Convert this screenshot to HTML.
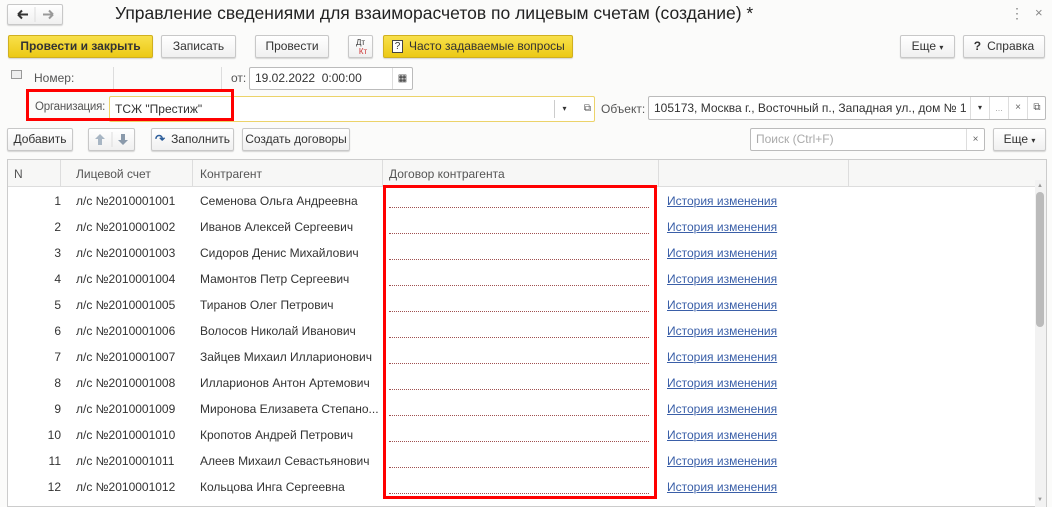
<!DOCTYPE html>
<html><head><meta charset="utf-8"><style>
*{box-sizing:border-box;margin:0;padding:0}
body{width:1052px;height:507px;background:#fbfbfa;font-family:"Liberation Sans",Arial,sans-serif;font-size:12px;color:#333;position:relative;overflow:hidden}
.a{position:absolute}
.btn{position:absolute;height:23px;border:1px solid #c8c8c8;border-radius:2px;background:linear-gradient(#fff,#f0f0f0);box-shadow:0 1px 1px rgba(0,0,0,.15);text-align:center;line-height:21px;color:#333;font-size:12px;white-space:nowrap}
.y{background:linear-gradient(#f8e04a,#ecc915);border-color:#d0b020}
.fld{position:absolute;height:23px;border:1px solid #bbb;border-radius:2px;background:#fff;line-height:21px;padding-left:5px;white-space:nowrap}
.lbl{position:absolute;color:#555;white-space:nowrap}
.vl{position:absolute;width:1px;background:#ddd}
.row{position:absolute;left:7px;width:1026px;height:26px;line-height:26px;white-space:nowrap}
.row span{position:absolute}
.dot{position:absolute;left:382px;width:260px;height:0;border-top:1px dotted #a05050;top:19px}
.lnk{color:#3a5fa8;text-decoration:underline}
</style></head><body>
<!-- title bar -->
<div class="btn" style="left:7px;top:4px;width:56px;height:21px">
<svg class="a" style="left:0;top:0" width="54" height="19"><path d="M10 9.5h10M10 9.5l4-4M10 9.5l4 4" stroke="#333" stroke-width="2" fill="none"/><path d="M27 2v15" stroke="#ddd"/><path d="M35 9.5h10M45 9.5l-4-4M45 9.5l-4 4" stroke="#999" stroke-width="2" fill="none"/></svg></div>
<div class="a" style="left:115px;top:3px;font-size:17.5px;color:#222;white-space:nowrap">Управление сведениями для взаиморасчетов по лицевым счетам (создание) *</div>
<div class="a" style="left:1010px;top:5px;color:#888;font-size:14px">⋮</div>
<div class="a" style="left:1035px;top:5px;color:#888;font-size:13px">×</div>
<!-- toolbar -->
<div class="btn y" style="left:8px;top:35px;width:145px;font-weight:bold;color:#333">Провести и закрыть</div>
<div class="btn" style="left:161px;top:35px;width:75px">Записать</div>
<div class="btn" style="left:255px;top:35px;width:74px">Провести</div>
<div class="btn" style="left:348px;top:35px;width:25px;font-size:8px;line-height:9px;padding-top:2px">Дт<br><span style="color:#c33;padding-left:5px">Кт</span></div>
<div class="btn y" style="left:383px;top:35px;width:190px;text-align:left;padding-left:8px;font-weight:normal"><span style="display:inline-block;width:11px;height:13px;border:1px solid #444;font-size:10px;line-height:11px;text-align:center;background:#fff;vertical-align:middle;margin-right:6px">?</span>Часто задаваемые вопросы</div>
<div class="btn" style="left:900px;top:35px;width:55px">Еще <span style="font-size:8px">▾</span></div>
<div class="btn" style="left:963px;top:35px;width:82px"><b style="margin-right:6px">?</b>Справка</div>
<!-- number row -->
<div class="a" style="left:11px;top:70px;width:11px;height:9px;border:1px solid #999;background:#eee"></div>
<div class="lbl" style="left:34px;top:71px">Номер:</div>
<div class="vl" style="left:113px;top:67px;height:22px"></div>
<div class="vl" style="left:221px;top:67px;height:22px"></div>
<div class="lbl" style="left:231px;top:71px">от:</div>
<div class="fld" style="left:249px;top:67px;width:164px">19.02.2022&nbsp; 0:00:00<span style="position:absolute;right:0;top:0;width:20px;height:21px;border-left:1px solid #ddd;text-align:center;font-size:10px">▦</span></div>
<!-- org row -->
<div class="lbl" style="left:35px;top:101px;font-size:11.5px;letter-spacing:-0.2px">Организация:</div>
<div class="fld" style="left:109px;top:96px;width:486px;height:26px;line-height:24px;border-color:#ecd36a">ТСЖ "Престиж"<span style="position:absolute;right:20px;top:3px;height:18px;border-left:1px solid #ccc;width:20px;text-align:center;font-size:8px;line-height:18px">▾</span><span style="position:absolute;right:3px;top:0;font-size:10px;color:#555">⧉</span></div>
<div class="a" style="left:26px;top:89px;width:208px;height:32px;border:3px solid #f00"></div>
<div class="lbl" style="left:601px;top:102px">Объект:</div>
<div class="fld" style="left:648px;top:96px;width:398px;height:24px;line-height:22px">105173, Москва г., Восточный п., Западная ул., дом № 1
<span style="position:absolute;left:321px;top:0;height:22px;border-left:1px solid #ddd;width:19px;text-align:center;font-size:8px">▾</span>
<span style="position:absolute;left:340px;top:0;height:22px;border-left:1px solid #ddd;width:19px;text-align:center;color:#aaa;font-size:9px">...</span>
<span style="position:absolute;left:359px;top:0;height:22px;border-left:1px solid #ddd;width:19px;text-align:center;color:#666;font-size:10px">×</span>
<span style="position:absolute;left:378px;top:0;height:22px;border-left:1px solid #ddd;width:19px;text-align:center;color:#555;font-size:10px">⧉</span></div>
<!-- button row -->
<div class="btn" style="left:7px;top:128px;width:66px">Добавить</div>
<div class="btn" style="left:88px;top:128px;width:47px">
<svg class="a" style="left:0;top:0" width="45" height="21"><path d="M11 5l-5 5h3v6h4v-6h3z" fill="#a8b6c4"/><path d="M23 3v15" stroke="#ddd"/><path d="M34 16l-5-5h3v-6h4v6h3z" fill="#8a9aab"/></svg></div>
<div class="btn" style="left:151px;top:128px;width:83px"><span style="color:#2c5d9a;font-weight:bold;margin-right:6px">↷</span>Заполнить</div>
<div class="btn" style="left:242px;top:128px;width:108px">Создать договоры</div>
<div class="fld" style="left:750px;top:128px;width:235px;color:#aaa">Поиск (Ctrl+F)<span style="position:absolute;right:0;top:0;width:18px;height:21px;border-left:1px solid #ddd;text-align:center;color:#666;font-size:10px">×</span></div>
<div class="btn" style="left:993px;top:128px;width:53px">Еще <span style="font-size:8px">▾</span></div>
<!-- table -->
<div class="a" style="left:7px;top:159px;width:1040px;height:348px;border:1px solid #ccc;background:#fff"></div>
<div class="a" style="left:8px;top:160px;width:1038px;height:27px;background:#f7f7f6;border-bottom:1px solid #ddd"></div>
<div class="vl" style="left:60px;top:160px;height:27px"></div>
<div class="vl" style="left:192px;top:160px;height:27px"></div>
<div class="vl" style="left:382px;top:160px;height:27px"></div>
<div class="vl" style="left:658px;top:160px;height:27px"></div>
<div class="vl" style="left:848px;top:160px;height:27px"></div>
<div class="lbl" style="left:14px;top:167px">N</div>
<div class="lbl" style="left:76px;top:167px">Лицевой счет</div>
<div class="lbl" style="left:200px;top:167px">Контрагент</div>
<div class="lbl" style="left:389px;top:167px">Договор контрагента</div>
<div class="a" style="left:1035px;top:180px;width:11px;height:327px;background:#f2f2f2"></div>
<div class="a" style="left:1037px;top:183px;font-size:6px;color:#999">▲</div>
<div class="a" style="left:1036px;top:192px;width:8px;height:135px;background:#bbb;border-radius:4px"></div>
<div class="a" style="left:1037px;top:497px;font-size:6px;color:#999">▼</div>

<div class="row" style="top:188px"><span style="left:0;width:54px;text-align:right">1</span><span style="left:69px">л/с №2010001001</span><span style="left:193px">Семенова Ольга Андреевна</span><i class="dot"></i><span style="left:660px" class="lnk">История изменения</span></div>
<div class="row" style="top:214px"><span style="left:0;width:54px;text-align:right">2</span><span style="left:69px">л/с №2010001002</span><span style="left:193px">Иванов Алексей Сергеевич</span><i class="dot"></i><span style="left:660px" class="lnk">История изменения</span></div>
<div class="row" style="top:240px"><span style="left:0;width:54px;text-align:right">3</span><span style="left:69px">л/с №2010001003</span><span style="left:193px">Сидоров Денис Михайлович</span><i class="dot"></i><span style="left:660px" class="lnk">История изменения</span></div>
<div class="row" style="top:266px"><span style="left:0;width:54px;text-align:right">4</span><span style="left:69px">л/с №2010001004</span><span style="left:193px">Мамонтов Петр Сергеевич</span><i class="dot"></i><span style="left:660px" class="lnk">История изменения</span></div>
<div class="row" style="top:292px"><span style="left:0;width:54px;text-align:right">5</span><span style="left:69px">л/с №2010001005</span><span style="left:193px">Тиранов Олег Петрович</span><i class="dot"></i><span style="left:660px" class="lnk">История изменения</span></div>
<div class="row" style="top:318px"><span style="left:0;width:54px;text-align:right">6</span><span style="left:69px">л/с №2010001006</span><span style="left:193px">Волосов Николай Иванович</span><i class="dot"></i><span style="left:660px" class="lnk">История изменения</span></div>
<div class="row" style="top:344px"><span style="left:0;width:54px;text-align:right">7</span><span style="left:69px">л/с №2010001007</span><span style="left:193px">Зайцев Михаил Илларионович</span><i class="dot"></i><span style="left:660px" class="lnk">История изменения</span></div>
<div class="row" style="top:370px"><span style="left:0;width:54px;text-align:right">8</span><span style="left:69px">л/с №2010001008</span><span style="left:193px">Илларионов Антон Артемович</span><i class="dot"></i><span style="left:660px" class="lnk">История изменения</span></div>
<div class="row" style="top:396px"><span style="left:0;width:54px;text-align:right">9</span><span style="left:69px">л/с №2010001009</span><span style="left:193px">Миронова Елизавета Степано...</span><i class="dot"></i><span style="left:660px" class="lnk">История изменения</span></div>
<div class="row" style="top:422px"><span style="left:0;width:54px;text-align:right">10</span><span style="left:69px">л/с №2010001010</span><span style="left:193px">Кропотов Андрей Петрович</span><i class="dot"></i><span style="left:660px" class="lnk">История изменения</span></div>
<div class="row" style="top:448px"><span style="left:0;width:54px;text-align:right">11</span><span style="left:69px">л/с №2010001011</span><span style="left:193px">Алеев Михаил Севастьянович</span><i class="dot"></i><span style="left:660px" class="lnk">История изменения</span></div>
<div class="row" style="top:474px"><span style="left:0;width:54px;text-align:right">12</span><span style="left:69px">л/с №2010001012</span><span style="left:193px">Кольцова Инга Сергеевна</span><i class="dot"></i><span style="left:660px" class="lnk">История изменения</span></div>

<div class="a" style="left:383px;top:185px;width:274px;height:314px;border:3px solid #f00"></div>
</body></html>
